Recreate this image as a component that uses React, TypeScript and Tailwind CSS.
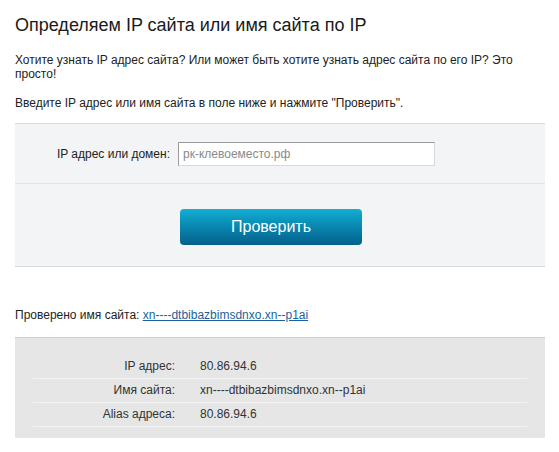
export default function App() {
    const rows = [
        { label: 'IP адрес:', value: '80.86.94.6' },
        { label: 'Имя сайта:', value: 'xn----dtbibazbimsdnxo.xn--p1ai' },
        { label: 'Alias адреса:', value: '80.86.94.6' },
    ];

    return (
        <div className="px-[15px] pb-4 bg-white text-[12px] text-[#222] font-['Liberation_Sans',Arial,sans-serif]">
            <h1 className="pt-[14px] text-[18px] leading-[22px] text-[#1a1a1a]">
                Определяем IP сайта или имя сайта по IP
            </h1>

            <p className="mt-[17px] leading-[14px]">
                Хотите узнать IP адрес сайта? Или может быть хотите узнать адрес сайта по его IP? Это просто!
            </p>
            <p className="mt-[15px] leading-[14px]">
                Введите IP адрес или имя сайта в поле ниже и нажмите "Проверить".
            </p>

            {/* Form */}
            <div className="mt-[13px] w-[530px] bg-[#f3f4f6] border-t border-b border-[#d8dbdf]">
                <div className="h-[60px] flex items-center pt-[1px] border-b border-[#e2e5e8]">
                    <span className="w-[155px] text-right text-[#222]">IP адрес или домен:</span>
                    <div className="ml-[8px] w-[257px] h-[24px] bg-white border border-t-[#9a9a9a] border-l-[#9a9a9a] border-r-[#d9d9d9] border-b-[#d9d9d9] flex items-center px-[4px] text-[#8a8a8a]">
                        рк-клевоеместо.рф
                    </div>
                </div>
                <div className="h-[82px] pt-[25px]">
                    <button className="ml-[165px] w-[182px] h-[36px] rounded-[4px] bg-gradient-to-b from-[#13aed3] to-[#04608c] text-white text-[16px] leading-[36px] font-['Liberation_Sans',Arial,sans-serif]">
                        Проверить
                    </button>
                </div>
            </div>

            <p className="mt-[41px] leading-[14px]">
                Проверено имя сайта:{' '}
                <a className="text-[#1d5f9c] underline" href="#">xn----dtbibazbimsdnxo.xn--p1ai</a>
            </p>

            {/* Result */}
            <div className="mt-[15px] w-[530px] bg-[#e6e6e6] border-t border-[#d0d0d0] pt-[17px] pb-[11px] px-[18px]">
                {rows.map((r) => (
                    <div key={r.label} className="h-[24px] pt-[4px] leading-[14px] flex border-b border-[#f3f3f3]">
                        <span className="w-[142px] text-right text-[#333]">{r.label}</span>
                        <span className="ml-[25px] text-[#333]">{r.value}</span>
                    </div>
                ))}
            </div>
        </div>
    );
}
